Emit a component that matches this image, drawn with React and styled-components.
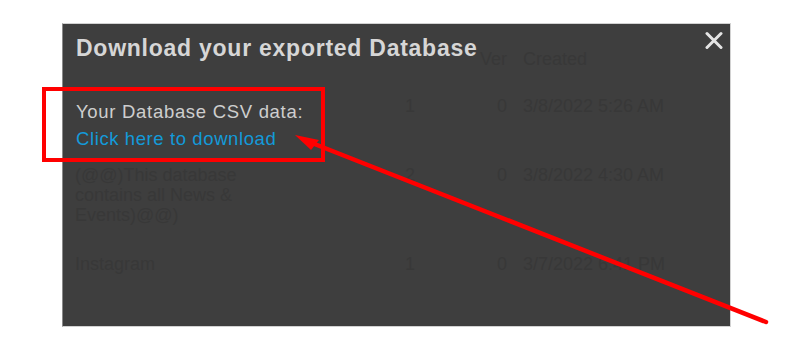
import React from "react";
import styled, { createGlobalStyle } from "styled-components";

const Global = createGlobalStyle`
  html, body { margin: 0; padding: 0; background: #ffffff; }
  body { font-family: "Liberation Sans", Arial, sans-serif; }
`;

const Page = styled.div`
  position: relative;
  width: 793px;
  height: 355px;
  box-sizing: border-box;
  padding: 23px 0 0 62px;
  overflow: hidden;
`;

const Panel = styled.div`
  position: relative;
  width: 669px;
  height: 304px;
  box-sizing: border-box;
  background: #3e3e3e;
  border: 1px solid #d2d2d2;
  border-left-color: #8a8a8a;
  padding: 25px 0 0 12px;
`;

/* faint table seen through the dark overlay */
const Table = styled.div`
  display: grid;
  grid-template-columns: 330px 92px 26px 1fr;
  font-family: "Liberation Sans", Arial, sans-serif;
  font-size: 18px;
  line-height: 20px;
  color: #383838;
`;

const Cell = styled.div`
  padding-top: ${(p) => p.$gap || 0}px;
  min-height: ${(p) => (p.$lines || 1) * 20}px;
  grid-column: ${(p) => (p.$span ? `span ${p.$span}` : "auto")};
  text-align: ${(p) => (p.$right ? "right" : "left")};
  padding-right: ${(p) => (p.$right ? 16 : 0)}px;
`;

const NameCell = styled(Cell)`
  width: 170px;
`;

const Overlay = styled.div`
  position: absolute;
  inset: 0;
  display: flex;
  flex-direction: column;
  align-items: flex-start;
  padding: 10px 13px;
`;

const Title = styled.h2`
  margin: 0;
  font-family: "Liberation Sans", Arial, sans-serif;
  font-weight: 700;
  font-size: 23px;
  line-height: 28px;
  letter-spacing: 0.75px;
  color: #d6d6d6;
`;

const Label = styled.div`
  margin-top: 36px;
  font-size: 18.5px;
  line-height: 27px;
  letter-spacing: 0.7px;
  color: #cecece;
`;

const Link = styled.a`
  font-size: 18.5px;
  line-height: 27px;
  letter-spacing: 0.6px;
  color: #139ad9;
  text-decoration: none;
  cursor: pointer;
`;

const Close = styled.button`
  position: absolute;
  top: 7px;
  right: 7px;
  width: 18px;
  height: 19px;
  padding: 0;
  border: 0;
  background: none;
  display: flex;
  cursor: pointer;
`;

const Highlight = styled.div`
  position: absolute;
  left: 42px;
  top: 87px;
  width: 283px;
  height: 75px;
  box-sizing: border-box;
  border: 4px solid #ff0000;
  pointer-events: none;
`;

const Annotation = styled.svg`
  position: absolute;
  inset: 0;
  pointer-events: none;
`;

const rows = [
  { name: "", lines: 2, n: "1", z: "0", date: "3/8/2022 5:26 AM" },
  { name: "(@@)This database contains all News & Events)@@)", lines: 3, n: "2", z: "0", date: "3/8/2022 4:30 AM" },
  { name: "Instagram", lines: 1, n: "1", z: "0", date: "3/7/2022 6:41 PM" },
];

export default function App() {
  return (
    <>
      <Global />
      <Page>
        <Panel>
          <Table>
            <Cell />
            <Cell $span={2} $right>Ver</Cell>
            <Cell>Created</Cell>
            {rows.map((r, i) => (
              <React.Fragment key={i}>
                <NameCell $gap={i === 0 ? 27 : 29} $lines={r.lines}>{r.name}</NameCell>
                <Cell $gap={i === 0 ? 27 : 29}>{r.n}</Cell>
                <Cell $gap={i === 0 ? 27 : 29}>{r.z}</Cell>
                <Cell $gap={i === 0 ? 27 : 29}>{r.date}</Cell>
              </React.Fragment>
            ))}
          </Table>
          <Overlay>
            <Title>Download your exported Database</Title>
            <Label>Your Database CSV data:</Label>
            <Link>Click here to download</Link>
            <Close aria-label="Close">
              <svg width="18" height="19" viewBox="0 0 18 19">
                <path d="M2 2.5 L16 16.5 M16 2.5 L2 16.5" stroke="#e4e4e4" strokeWidth="3" strokeLinecap="round" />
              </svg>
            </Close>
          </Overlay>
        </Panel>
        <Highlight />
        <Annotation width="793" height="355" viewBox="0 0 793 355">
          <line x1="312" y1="143" x2="766" y2="322" stroke="#ff0000" strokeWidth="4.5" strokeLinecap="round" />
          <polygon points="295,135 319,140 311,150" fill="#ff0000" />
        </Annotation>
      </Page>
    </>
  );
}
